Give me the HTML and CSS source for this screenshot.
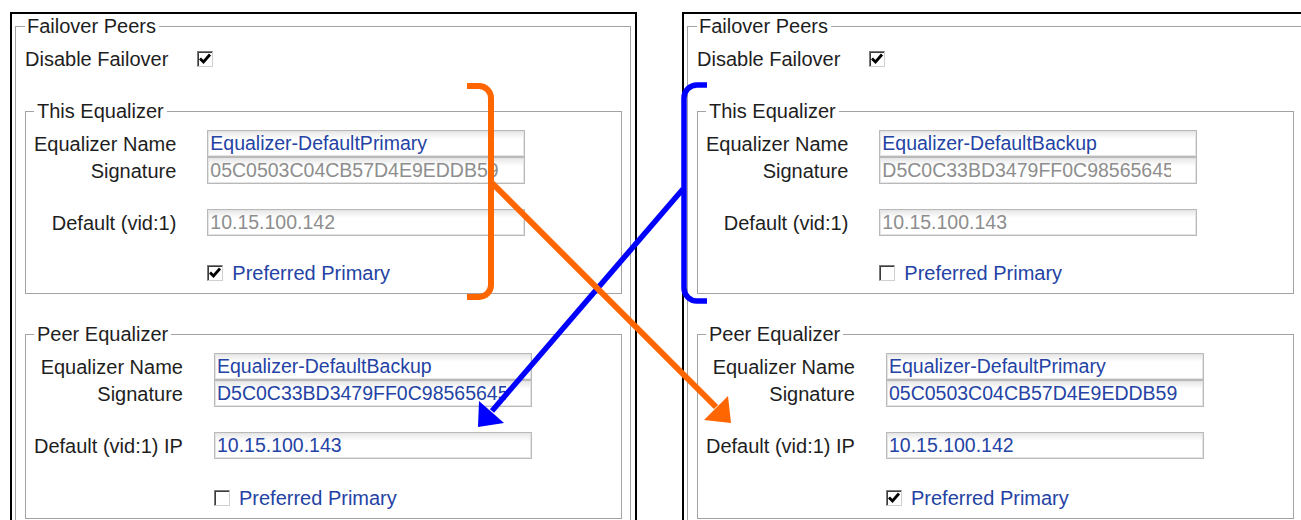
FILE: index.html
```html
<!DOCTYPE html>
<html lang="en">

<head>
    <meta charset="UTF-8">
    <title>Failover Peers</title>
    <link rel="stylesheet" href="styles.css">
</head>

<body>

    <div class="page">

        <!-- primary unit -->
        <div class="panel">
            <fieldset class="group outer">
                <legend>Failover Peers</legend>
                <div class="toggle-row">
                    <span class="toggle-label">Disable Failover</span>
                    <span class="check checked"><svg viewBox="0 0 14 14"><polyline points="2,6.5 5.5,10 12,2.5"/></svg></span>
                </div>

                <fieldset class="group">
                    <legend>This Equalizer</legend>
                    <div class="form-grid">
                        <label class="field-label">Equalizer Name</label>
                        <input class="field" type="text" value="Equalizer-DefaultPrimary" readonly>
                        <label class="field-label">Signature</label>
                        <input class="field disabled" type="text" value="05C0503C04CB57D4E9EDDB59" readonly>
                        <label class="field-label spaced">Default (vid:1)</label>
                        <input class="field disabled spaced" type="text" value="10.15.100.142" readonly>
                        <span class="pref-row">
                            <span class="check checked"><svg viewBox="0 0 14 14"><polyline points="2,6.5 5.5,10 12,2.5"/></svg></span>
                            <span class="pref-label">Preferred Primary</span>
                        </span>
                    </div>
                </fieldset>

                <fieldset class="group peer">
                    <legend>Peer Equalizer</legend>
                    <div class="form-grid">
                        <label class="field-label">Equalizer Name</label>
                        <input class="field" type="text" value="Equalizer-DefaultBackup" readonly>
                        <label class="field-label">Signature</label>
                        <input class="field" type="text" value="D5C0C33BD3479FF0C98565645F" readonly>
                        <label class="field-label spaced">Default (vid:1) IP</label>
                        <input class="field spaced" type="text" value="10.15.100.143" readonly>
                        <span class="pref-row">
                            <span class="check"></span>
                            <span class="pref-label">Preferred Primary</span>
                        </span>
                    </div>
                </fieldset>
            </fieldset>
        </div>

        <!-- backup unit -->
        <div class="panel">
            <fieldset class="group outer">
                <legend>Failover Peers</legend>
                <div class="toggle-row">
                    <span class="toggle-label">Disable Failover</span>
                    <span class="check checked"><svg viewBox="0 0 14 14"><polyline points="2,6.5 5.5,10 12,2.5"/></svg></span>
                </div>

                <fieldset class="group">
                    <legend>This Equalizer</legend>
                    <div class="form-grid">
                        <label class="field-label">Equalizer Name</label>
                        <input class="field" type="text" value="Equalizer-DefaultBackup" readonly>
                        <label class="field-label">Signature</label>
                        <input class="field disabled" type="text" value="D5C0C33BD3479FF0C98565645F" readonly>
                        <label class="field-label spaced">Default (vid:1)</label>
                        <input class="field disabled spaced" type="text" value="10.15.100.143" readonly>
                        <span class="pref-row">
                            <span class="check"></span>
                            <span class="pref-label">Preferred Primary</span>
                        </span>
                    </div>
                </fieldset>

                <fieldset class="group peer">
                    <legend>Peer Equalizer</legend>
                    <div class="form-grid">
                        <label class="field-label">Equalizer Name</label>
                        <input class="field" type="text" value="Equalizer-DefaultPrimary" readonly>
                        <label class="field-label">Signature</label>
                        <input class="field" type="text" value="05C0503C04CB57D4E9EDDB59" readonly>
                        <label class="field-label spaced">Default (vid:1) IP</label>
                        <input class="field spaced" type="text" value="10.15.100.142" readonly>
                        <span class="pref-row">
                            <span class="check checked"><svg viewBox="0 0 14 14"><polyline points="2,6.5 5.5,10 12,2.5"/></svg></span>
                            <span class="pref-label">Preferred Primary</span>
                        </span>
                    </div>
                </fieldset>
            </fieldset>
        </div>

        <!-- annotation overlay -->
        <svg class="annotations" width="1301" height="520" viewBox="0 0 1301 520">
            <g class="blue">
                <path d="M707,85 H697 A13,13 0 0 0 684,98 V288 A13,13 0 0 0 697,301 H707"/>
                <path d="M683,189 L492,411"/>
                <polygon points="478,427 479,401 504,423"/>
            </g>
            <g class="orange">
                <path d="M467,86 H479 A12,12 0 0 1 491,98 V285 A12,12 0 0 1 479,297 H467"/>
                <path d="M492,183 L716,407"/>
                <polygon points="731,423 728,396 704,420"/>
            </g>
        </svg>

    </div>

</body>

</html>
```

FILE: styles.css
```css
body {
    margin: 0;
    width: 1301px;
    height: 520px;
    overflow: hidden;
    background-color: #fff;
    font-family: "Liberation Sans", Arial, sans-serif;
    font-size: 20px;
    line-height: 22px;
    color: #1e1e1e;
}

.page {
    position: relative;
    display: flex;
    gap: 45px;
    padding: 12px 0 0 10px;
}

.panel {
    flex: none;
    width: 627px;
    height: 560px;
    box-sizing: border-box;
    border: 2px solid #000;
    padding: 0 4px 0 3px;
}

.group {
    margin: 0;
    border: 1px solid #a3a3a3;
    padding: 8px 8px 9px 8px;
    min-width: 0;
}

.group legend {
    padding: 0 3px;
    line-height: 22px;
}

.outer {
    margin-top: 1px;
    padding: 0 8px 0 9px;
    min-height: 600px;
}

.outer > legend {
    padding: 0 3px 0 2px;
}

.group .group {
    margin-top: 30px;
}

.group .peer {
    margin-top: 29px;
}

.toggle-row {
    display: flex;
    align-items: center;
    height: 22px;
    margin-top: 11px;
}

.toggle-label {
    width: 172px;
}

.check {
    flex: none;
    display: inline-block;
    width: 16px;
    height: 16px;
    box-sizing: border-box;
    border: 1px solid;
    border-color: #7a7a7a #d0d0d0 #d0d0d0 #7a7a7a;
    box-shadow: inset 1px 1px 0 #3c3c3c;
    background-color: #fff;
}

.check svg {
    display: block;
    width: 14px;
    height: 14px;
}

.check polyline {
    fill: none;
    stroke: #000;
    stroke-width: 2.8;
}

.form-grid {
    display: grid;
    grid-template-columns: auto 318px;
    justify-content: start;
    column-gap: 31px;
    align-items: center;
}

.field-label {
    text-align: right;
    white-space: nowrap;
}

.field {
    display: block;
    width: 318px;
    height: 27px;
    box-sizing: border-box;
    margin: 0;
    border: 1px solid #b9b9b9;
    box-shadow: inset 0 0 0 1px #e4e4e4;
    padding: 0 25px 0 2px;
    background: linear-gradient(to bottom, #e6e6e6 0, #ffffff 8px);
    font-family: "Liberation Sans", Arial, sans-serif;
    font-size: 19.5px;
    color: #2443a4;
    outline: none;
}

.field.disabled {
    color: #8e8e8e;
}

.spaced {
    margin-top: 25px;
}

.pref-row {
    grid-column: 2;
    display: flex;
    align-items: center;
    gap: 9px;
    margin-top: 26px;
    height: 22px;
    color: #2443a4;
}

.peer .pref-row {
    margin-top: 28px;
}

.annotations {
    position: absolute;
    left: 0;
    top: 0;
    pointer-events: none;
}

.annotations path {
    fill: none;
    stroke-width: 6;
}

.blue path {
    stroke: #0000ff;
    stroke-width: 5.5;
}

.blue polygon {
    fill: #0000ff;
}

.orange path {
    stroke: #ff6600;
}

.orange polygon {
    fill: #ff6600;
}
```
